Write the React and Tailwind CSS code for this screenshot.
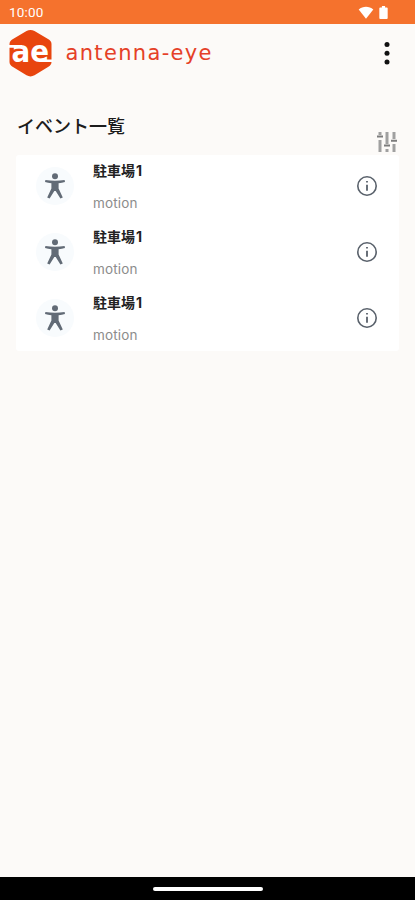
import React from 'react';

const events = [
  { id: 1, place: '駐車場', number: 1, type: 'motion' },
  { id: 2, place: '駐車場', number: 1, type: 'motion' },
  { id: 3, place: '駐車場', number: 1, type: 'motion' },
];

function StatusBar() {
  return (
    <div className="flex h-6 shrink-0 items-center justify-between bg-[#f5722d] pl-[9px] pr-[27px] text-white">
      <span className="pt-[2px] font-['Roboto',sans-serif] text-[13.5px] leading-none tracking-[0.2px]">10:00</span>
      <div className="flex items-center gap-[5px] pt-[1px]">
        <svg width="16" height="13" viewBox="0 0 16 13" fill="currentColor">
          <path d="M.7 3.5C4.8-.3 11.2-.3 15.3 3.5L8 12.8Z" />
        </svg>
        <svg width="9" height="13" viewBox="0 0 9 14" fill="currentColor">
          <path d="M2.8 0h3.4v1.5H8q1 0 1 1V13q0 1-1 1H1q-1 0-1-1V2.5q0-1 1-1h1.8Z" />
        </svg>
      </div>
    </div>
  );
}

function Logo() {
  return (
    <svg width="206" height="50" viewBox="0 0 206 50">
      <path d="M22.5 2Q24.5 2 26.5 3L40 11Q43.5 13 43.5 16V34Q43.5 37 40 39L26.5 47.3Q22.5 49.5 18.5 47.3L5 39Q1.5 37 1.5 34V16Q1.5 13 5 11L18.5 3Q20.5 2 22.5 2Z" fill="#e8450e" />
      <path d="M0 18.4H14M34 32.8H45" stroke="#fff" strokeWidth="2.6" fill="none" />
      <text x="3.5" y="34" textLength="37.5" lengthAdjust="spacingAndGlyphs" fill="#fff" fontFamily="DejaVu Sans, sans-serif" fontWeight="700" fontSize="29.5">ae</text>
      <text x="57.5" y="31.5" textLength="146" lengthAdjust="spacing" fill="#e54027" fontFamily="DejaVu Sans, sans-serif" fontWeight="400" fontSize="21">antenna-eye</text>
    </svg>
  );
}

function Header() {
  return (
    <header className="flex h-[57px] shrink-0 items-center justify-between pl-2 pr-[25px]">
      <Logo />
      <svg width="6" height="24" viewBox="0 0 6 24" fill="#111">
        <circle cx="3" cy="3.5" r="2.5" />
        <circle cx="3" cy="12.3" r="2.5" />
        <circle cx="3" cy="21" r="2.5" />
      </svg>
    </header>
  );
}

function FilterIcon() {
  return (
    <svg width="22" height="22" viewBox="0 0 22 22" fill="none" stroke="#a0a0a0" strokeWidth="3">
      <path d="M4 1V4M4 9V21M11 1V13M11 18V21M18 1V8M18 13V21" />
      <path d="M1 5.5H7M8 14.5H14M15 9.8H21" stroke="#7c7c7c" strokeWidth="2" />
    </svg>
  );
}

function PersonIcon() {
  return (
    <svg width="22" height="28" viewBox="0 0 22 28" fill="#626b76">
      <circle cx="11" cy="4.2" r="3" />
      <path d="M1.4 8Q6 8.8 11 8.8T20.6 8L21 9.9Q18 10.8 14.6 11.2V16.5L18.8 25.4L16.4 26.6L11.7 19H10.3L5.6 26.6L3.2 25.4L7.4 16.5V11.2Q4 10.8 1 9.9Z" />
    </svg>
  );
}

function InfoIcon() {
  return (
    <svg width="22" height="22" viewBox="0 0 22 22" fill="none" stroke="#59616b">
      <circle cx="11" cy="11" r="9.2" strokeWidth="1.6" />
      <path d="M11 9.8V15.8M11 6V7.6" strokeWidth="1.8" />
    </svg>
  );
}

function EventRow({ event }) {
  return (
    <li className="flex h-[65.8px] items-start justify-between pl-5 pr-[21px] last:h-16">
      <div className="flex items-start">
        <div className="mt-3 flex size-[38px] items-center justify-center rounded-full bg-[#f8fbfd]">
          <PersonIcon />
        </div>
        <div className="ml-[19px] flex flex-col">
          <span className="mt-[5px] h-[22px] font-['Inter','Noto_Sans_CJK_JP',sans-serif] text-[14px] font-semibold leading-[22px] text-[#222]">{event.place}<b className="ml-px font-bold">{event.number}</b></span>
          <span className="mt-[11px] h-5 font-['Inter',sans-serif] text-[13.5px] leading-5 tracking-[0.15px] text-[#8c8c8c]">{event.type}</span>
        </div>
      </div>
      <div className="mt-5"><InfoIcon /></div>
    </li>
  );
}

export default function App() {
  return (
    <div className="flex h-[900px] w-[415px] flex-col overflow-hidden bg-[#fcfaf8]">
      <StatusBar />
      <Header />
      <main className="flex-1">
        <div className="flex h-[74px] justify-between pl-[17px] pr-[17px]">
          <h1 className="mt-[31px] font-['Noto_Sans_CJK_JP',sans-serif] text-[18px] font-medium leading-[26px] text-[#1c1c1c]">イベント一覧</h1>
          <div className="mt-[50px]"><FilterIcon /></div>
        </div>
        <ul className="mx-4 rounded-[3px] bg-white">
          {events.map((event) => <EventRow key={event.id} event={event} />)}
        </ul>
      </main>
      <footer className="flex h-[23px] shrink-0 items-center justify-center bg-black">
        <div className="h-1 w-[110px] rounded-full bg-white" />
      </footer>
    </div>
  );
}
